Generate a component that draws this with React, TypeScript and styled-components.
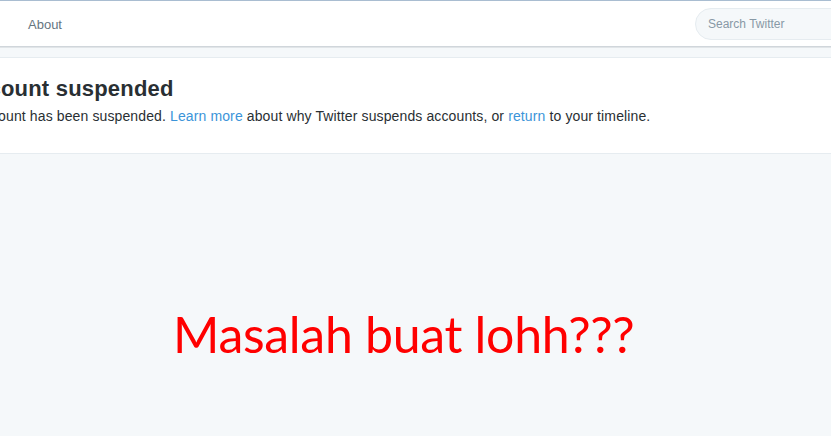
import React from "react";
import styled, { createGlobalStyle } from "styled-components";

const GlobalStyle = createGlobalStyle`
	html, body {
		margin: 0;
		padding: 0;
		background: #f5f8fa;
		overflow: hidden;
	}

	body {
		font-family: "Liberation Sans", Arial, sans-serif;
		color: #14171a;
	}
`;

const App = () => {
	return (
		<Page>
			<GlobalStyle />
			<TopBar>
				<NavLinks>
					<NavLink href="#">About</NavLink>
				</NavLinks>
				<SearchBox placeholder="Search Twitter" />
			</TopBar>

			<SuspendedCard>
				<CardContent>
					<Heading>Account suspended</Heading>
					<Message>
						This account has been suspended. <Link href="#">Learn more</Link> about why Twitter
						suspends accounts, or <Link href="#">return</Link> to your timeline.
					</Message>
				</CardContent>
			</SuspendedCard>

			<Timeline>
				<Caption>Masalah buat lohh???</Caption>
			</Timeline>
		</Page>
	);
};

export default App;

const Page = styled.div`
	width: 831px;
	height: 436px;
	display: flex;
	flex-direction: column;
	background: #f5f8fa;
	overflow: hidden;
`;

const TopBar = styled.header`
	height: 47px;
	flex-shrink: 0;
	box-sizing: border-box;

	display: flex;
	align-items: center;
	justify-content: space-between;
	padding-left: 28px;

	background: #fff;
	border-top: 1px solid #a9bdd1;
	border-bottom: 1px solid #d0d6db;
	box-shadow: 0 1px 0 #e1e5e8;
`;

const NavLinks = styled.nav`
	display: flex;
	gap: 24px;
	padding-top: 2px;
`;

const NavLink = styled.a`
	font-size: 13px;
	color: #66757f;
	text-decoration: none;
	line-height: 20px;
`;

const SearchBox = styled.input`
	width: 170px;
	height: 32px;
	box-sizing: border-box;
	margin-right: -34px;
	padding: 0 12px;

	background: #f5f8fa;
	border: 1px solid #e6ecf0;
	border-radius: 16px;

	font-family: "Liberation Sans", Arial, sans-serif;
	font-size: 12px;
	color: #14171a;
	outline: none;

	&::placeholder {
		color: #8899a6;
	}
`;

const SuspendedCard = styled.section`
	margin-top: 10px;
	height: 97px;
	flex-shrink: 0;
	box-sizing: border-box;

	background: #fff;
	border-top: 1px solid #e6ecf0;
	border-bottom: 1px solid #e6ecf0;
`;

const CardContent = styled.div`
	margin-left: -55px;
	padding-top: 16px;
`;

const Heading = styled.h1`
	margin: 0 0 0 15px;
	font-size: 22px;
	font-weight: bold;
	letter-spacing: 0.2px;
	line-height: 30px;
	color: #292f33;
`;

const Message = styled.p`
	margin: 2px 0 0;
	font-size: 14px;
	letter-spacing: 0.12px;
	line-height: 20px;
	color: #292f33;
	white-space: nowrap;
`;

const Link = styled.a`
	color: #3b94d9;
	text-decoration: none;
`;

const Timeline = styled.main`
	flex: 1;
	display: flex;
	padding: 150px 0 0 173px;
`;

const Caption = styled.div`
	font-family: Lato, "Open Sans", sans-serif;
	font-size: 50px;
	letter-spacing: -0.3px;
	line-height: 60px;
	color: #ff0000;
	white-space: nowrap;
`;
